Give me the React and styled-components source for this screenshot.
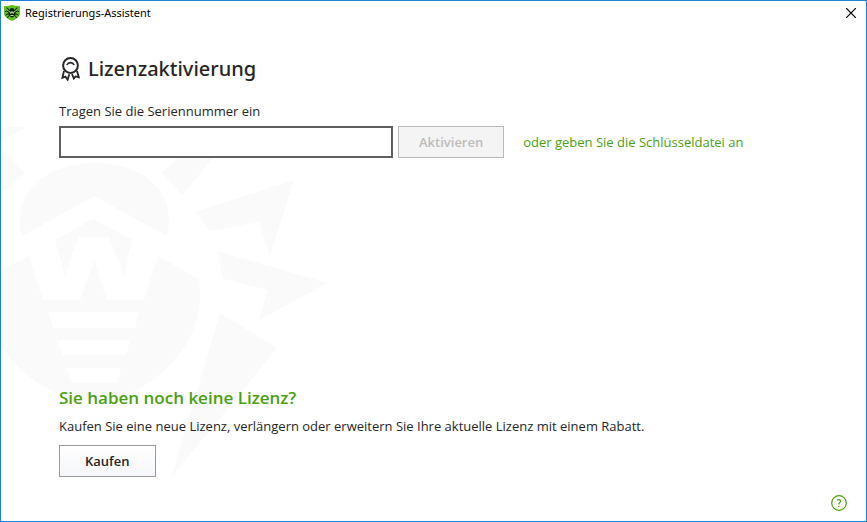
import React, { useState } from "react";
import styled, { createGlobalStyle } from "styled-components";

const GlobalStyle = createGlobalStyle`
  * {
    box-sizing: border-box;
  }

  body {
    margin: 0;
    background-color: #ffffff;
    color: #262626;
    font-family: "Open Sans", "Noto Sans", sans-serif;
    font-size: 13px;
    line-height: 20px;
  }
`;

const Window = styled.div`
  position: relative;
  z-index: 0;
  display: flex;
  flex-direction: column;
  min-height: 100vh;
  border: 1px solid #1883d7;
  overflow: hidden;
`;

const Watermark = styled.svg`
  position: absolute;
  top: 0;
  left: 0;
  z-index: -1;
  width: 340px;
  height: 490px;
  fill: #fafafa;
`;

const TitleBar = styled.header`
  display: flex;
  align-items: center;
  height: 24px;
  padding: 0 10px 0 3px;
`;

const TitleText = styled.span`
  flex: 1;
  margin-left: 5px;
  color: #000000;
  font-family: "Noto Sans", sans-serif;
  font-size: 11px;
`;

const IconButton = styled.button`
  display: flex;
  padding: 0;
  border: none;
  background: none;
  color: ${(props) => props.$color};
  cursor: pointer;
`;

const Content = styled.main`
  flex: 1;
  display: flex;
  flex-direction: column;
  justify-content: space-between;
  padding: 29px 58px 0;
`;

const Heading = styled.h1`
  display: flex;
  align-items: center;
  gap: 8px;
  margin: 0;
  font-family: "Noto Sans", sans-serif;
  font-size: 20px;
  font-weight: 500;
  line-height: 30px;
`;

const Label = styled.label`
  display: block;
  margin: 17px 0 5px;
`;

const SerialRow = styled.form`
  display: flex;
  align-items: center;
  gap: 5px;
`;

const SerialInput = styled.input`
  flex: 0 1 334px;
  min-width: 0;
  height: 32px;
  padding: 0 8px;
  border: 2px solid #5f5f5f;
  border-radius: 0;
  background-color: #ffffff;
  font: inherit;
  outline: none;
`;

const Button = styled.button`
  height: 32px;
  padding: 0 ${(props) => (props.$wide ? "20px" : "25px")};
  border: 1px solid #9a9a9a;
  background: linear-gradient(#ffffff, #f5f7fa);
  color: #262626;
  font: inherit;
  font-weight: 600;
  white-space: nowrap;
  cursor: pointer;

  &:disabled {
    border-color: #b9b9b9;
    background: #f4f4f4;
    color: #bcbcbc;
    cursor: default;
  }
`;

const KeyFileLink = styled.a`
  margin-left: 14px;
  color: #4ba010;
  text-decoration: none;
  white-space: nowrap;
`;

const SubHeading = styled.h2`
  margin: 0;
  color: #4ba010;
  font-size: 17px;
  font-weight: 600;
  line-height: 26px;
`;

const Text = styled.p`
  margin: 5px 0 9px;
`;

const Footer = styled.footer`
  display: flex;
  justify-content: flex-end;
  padding: 18px 19px 10px;
`;

function Spider() {
  return (
    <Watermark viewBox="1 1 340 490" aria-hidden="true">
      <path d="M0 127H27L0 142ZM0 148L25 173L0 196Z" />
      <path d="M162 173L178 158L195 142L161 127H240L213 158L182 195Z" />
      <path d="M22 236C11 195 43 163 95 163C146 163 178 195 167 236L94 196Z" />
      <path d="M93 219L132 240L124 276L109 237H78L65 276L55 240Z" />
      <path
        fillRule="evenodd"
        d="M0 271L29 256L43 300H80L94 260L107 300H144L158 256L199 279C206 325 181 369 128 395H60C36 384 15 368 0 345ZM48 312L53 328H135L139 312ZM57 340L62 355H126L130 340ZM66 368L72 383H117L121 368Z"
      />
      <path d="M195 212L294 180L270 256L259 222L210 231Z" />
      <path d="M217 251L328 283L259 320L268 290L223 279Z" />
      <path d="M220 313L277 348L253 378L171 478Z" />
    </Watermark>
  );
}

function ShieldIcon() {
  return (
    <svg width="16" height="16" viewBox="0 0 16 16" aria-hidden="true">
      <path d="M0 1Q4 1.2 8 0Q12 1.2 16 1V9Q15 13 8 16Q1 13 0 9Z" fill="#5fc01f" />
      <path
        d="M5.5 6L4 3.5L2.5 3M10.5 6L12 3.5L13.5 3M5 7.5L3 6L1 6.5M11 7.5L13 6L15 6.5M5 9L3 9L1.5 10.5M11 9L13 9L14.5 10.5M5.5 10.5L4 11.5L3.5 13M10.5 10.5L12 11.5L12.5 13"
        fill="none"
        stroke="#0b1f04"
      />
      <path d="M5.5 5Q6 3 8 3T10.5 5L11.5 8Q11.5 11 8 12.5Q4.5 11 4.5 8Z" fill="#0b1f04" />
      <path d="M5.5 6L6.8 8.5L8 6.5L9.2 8.5L10.5 6M6.5 10.5H9.5" fill="none" stroke="#d5f4c0" strokeWidth=".9" />
    </svg>
  );
}

function CloseIcon() {
  return (
    <svg width="10" height="10" viewBox="0 0 10 10" aria-hidden="true">
      <path d="M0 0L10 10M10 0L0 10" stroke="currentColor" strokeWidth="1.2" />
    </svg>
  );
}

function MedalIcon() {
  return (
    <svg
      width="21"
      height="24"
      viewBox="0 0 21 24"
      fill="none"
      stroke="#262626"
      strokeWidth="2"
      aria-hidden="true"
    >
      <circle cx="11.5" cy="8.5" r="7.4" />
      <path d="M7.8 8Q9 5.6 11.5 5.6T15.2 8" strokeWidth="1.6" />
      <path d="M5 14L3.4 20.8L6.4 19.6L8.6 22.8L10.3 17.2M18 14L19.8 20.2L16.6 19.4L14.8 21.6L13 17" strokeWidth="1.8" />
    </svg>
  );
}

function HelpIcon() {
  return (
    <svg width="16" height="16" viewBox="0 0 16 16" fill="none" stroke="currentColor" aria-hidden="true">
      <circle cx="8" cy="8" r="7.3" strokeWidth="1.2" />
      <path d="M6 5.3Q8 4 9.3 5.2Q10.2 6.7 8.7 7.7Q7.8 8.4 7.8 9.5" strokeWidth="1.2" />
      <path d="M7.8 10.7V12" strokeWidth="1.3" />
    </svg>
  );
}

function App() {
  const [serial, setSerial] = useState("");

  return (
    <Window>
      <GlobalStyle />
      <Spider />
      <TitleBar>
        <ShieldIcon />
        <TitleText>Registrierungs-Assistent</TitleText>
        <IconButton type="button" aria-label="Schließen" $color="#000000">
          <CloseIcon />
        </IconButton>
      </TitleBar>
      <Content>
        <section>
          <Heading>
            <MedalIcon />
            Lizenzaktivierung
          </Heading>
          <Label htmlFor="serial">Tragen Sie die Seriennummer ein</Label>
          <SerialRow onSubmit={(e) => e.preventDefault()}>
            <SerialInput
              id="serial"
              type="text"
              autoComplete="off"
              value={serial}
              onChange={(e) => setSerial(e.target.value)}
            />
            <Button type="submit" $wide disabled={!serial}>
              Aktivieren
            </Button>
            <KeyFileLink href="#keyfile">oder geben Sie die Schlüsseldatei an</KeyFileLink>
          </SerialRow>
        </section>
        <section>
          <SubHeading>Sie haben noch keine Lizenz?</SubHeading>
          <Text>Kaufen Sie eine neue Lizenz, verlängern oder erweitern Sie Ihre aktuelle Lizenz mit einem Rabatt.</Text>
          <Button type="button">Kaufen</Button>
        </section>
      </Content>
      <Footer>
        <IconButton type="button" aria-label="Hilfe" $color="#4ba010">
          <HelpIcon />
        </IconButton>
      </Footer>
    </Window>
  );
}

export default App;
